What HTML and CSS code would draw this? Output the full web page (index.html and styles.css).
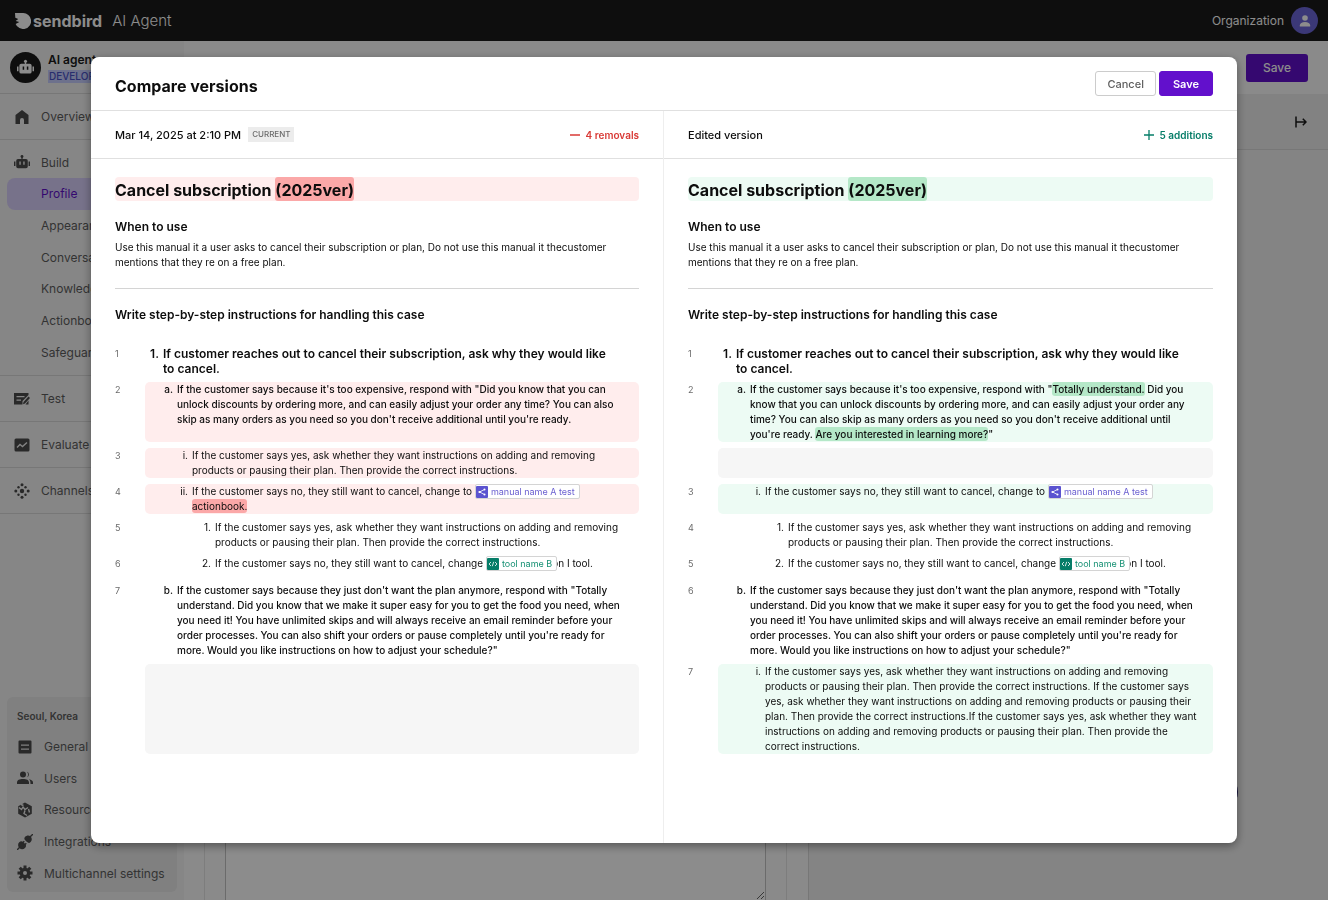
FILE: index.html
```html
<!DOCTYPE html>
<html lang="en">
<head>
    <meta charset="UTF-8">
    <meta name="viewport" content="width=device-width, initial-scale=1.0">
    <title>Compare versions</title>
    <link rel="stylesheet" href="styles.css">
</head>
<body>

<!-- Shared icons -->
<svg class="sprite" aria-hidden="true">
    <symbol id="bot" viewBox="0 0 18 16">
        <circle cx="9" cy="1.8" r="1.6"/>
        <path d="M8.3 2h1.4v3H8.3zM0 7.5h1.6v5H0zM16.4 7.5H18v5h-1.6z"/>
        <path fill-rule="evenodd" d="M4.5 4.5h9a2 2 0 0 1 2 2V13a2 2 0 0 1-2 2h-9a2 2 0 0 1-2-2V6.5a2 2 0 0 1 2-2zM6 7.5v3.5h1.6V7.5zm4.4 0v3.5H12V7.5z"/>
    </symbol>
    <symbol id="share" viewBox="0 0 12 12">
        <path d="M8.5 3.5L3.5 6l5 2.5" fill="none" stroke="#fff" stroke-width=".8"/>
        <circle cx="3.5" cy="6" r="1.1" fill="#fff"/><circle cx="8.5" cy="3.5" r="1" fill="#fff"/><circle cx="8.5" cy="8.5" r="1" fill="#fff"/>
    </symbol>
    <symbol id="code" viewBox="0 0 12 12">
        <path d="M4 4L2 6l2 2M8 4l2 2-2 2M6.7 3.8L5.3 8.2" fill="none" stroke="#fff" stroke-width=".8"/>
    </symbol>
</svg>

<div class="app">
    <header class="app-header">
        <svg class="logo-mark" viewBox="0 0 15 15" aria-hidden="true"><path d="M0 0h7.5A7.5 7.5 0 1 1 .6 10.200L4 8.500.6 7.600 3 5.600.3 4.500z"/></svg>
        <span class="logo-name">sendbird</span>
        <span class="product">AI Agent</span>
        <span class="org">Organization</span>
        <span class="avatar"><svg viewBox="0 0 12 12" width="12" height="12" aria-hidden="true"><circle cx="6" cy="3" r="2.8"/><path d="M.8 11.5V10.5C.8 8.3 3 7 6 7s5.2 1.300 5.2 3.500v1z"/></svg></span>
    </header>

    <div class="shell">
        <nav class="sidebar">
            <div class="agent">
                <span class="agent-icon"><svg width="17" height="16"><use href="#bot"/></svg></span>
                <div>
                    <div class="agent-name">AI agent</div>
                    <span class="agent-env">DEVELOPMENT</span>
                </div>
            </div>
            <div class="nav-group">
                <a class="nav-item" href="#"><svg viewBox="0 0 16 16" aria-hidden="true"><path d="M8 1l6.500 5v9H10v-4a2 2 0 0 0-4 0v4H1.500V6z"/></svg>Overview</a>
            </div>
            <div class="nav-group">
                <a class="nav-item" href="#"><svg aria-hidden="true"><use href="#bot"/></svg>Build</a>
                <div class="sub-list">
                    <a class="active" href="#">Profile</a>
                    <a href="#">Appearance</a>
                    <a href="#">Conversation</a>
                    <a href="#">Knowledge</a>
                    <a href="#">Actionbooks</a>
                    <a href="#">Safeguards</a>
                </div>
            </div>
            <div class="nav-group">
                <a class="nav-item" href="#"><svg viewBox="0 0 16 16" aria-hidden="true"><path fill-rule="evenodd" d="M0 2h14.500v2L8.500 10v3.500H0zM2.500 5v1.300h8V5zm0 3.500v1.300H7V8.500z"/><path d="M14.500 5.500L16 7l-5 5.500-2 .8.500-2.200z"/><path d="M14.500 9.500v4H11.500z"/></svg>Test</a>
            </div>
            <div class="nav-group">
                <a class="nav-item" href="#"><svg viewBox="0 0 16 16" aria-hidden="true"><rect x=".5" y="1.5" width="15" height="13" rx="1.5"/><path class="knock" d="M3 10.500l3-3 2.500 2L13 5.500"/></svg>Evaluate</a>
            </div>
            <div class="nav-group">
                <a class="nav-item" href="#"><svg viewBox="0 0 16 16" aria-hidden="true"><circle cx="8" cy="8" r="2.2"/><circle cx="8" cy="1.8" r="1.5"/><circle cx="8" cy="14.2" r="1.5"/><circle cx="1.8" cy="8" r="1.5"/><circle cx="14.2" cy="8" r="1.5"/><circle cx="4.500" cy="4.200" r="1.200"/><circle cx="11.500" cy="4.200" r="1.200"/><circle cx="4.500" cy="11.800" r="1.200"/><circle cx="11.500" cy="11.800" r="1.200"/></svg>Channels</a>
            </div>

            <div class="workspace-box">
                <div class="workspace-name">Seoul, Korea</div>
                <div class="workspace-list">
                    <a href="#"><svg viewBox="0 0 16 16" aria-hidden="true"><path fill-rule="evenodd" d="M2.500 1.500h11a1 1 0 0 1 1 1v11a1 1 0 0 1-1 1h-11a1 1 0 0 1-1-1v-11a1 1 0 0 1 1-1zM4 5.500v1.300h8V5.500zm0 4v1.300h8V9.500z"/></svg>General</a>
                    <a href="#"><svg viewBox="0 0 16 16" aria-hidden="true"><circle cx="6" cy="4.5" r="3"/><path d="M0 14v-1.500C0 10 2.500 9 6 9s6 1 6 3.500V14zM10 1.700a3 3 0 0 1 0 5.600 4.500 4.500 0 0 0 0-5.600zM12 9.200c2.500.4 4 1.600 4 3.300V14h-2.500c0-2-.2-3.600-1.500-4.800z"/></svg>Users</a>
                    <a href="#"><svg viewBox="0 0 16 16" aria-hidden="true"><path d="M8 .5l6.800 3.800v7.400L8 15.500l-6.800-3.800V4.300z"/><path class="knock" d="M2 5.500l2.500 2L6 5l2 2.500 3-2M8 8.500l-1 3 3 2M11.500 7l1 3.500M4 2.500l2.500 1"/></svg>Resources</a>
                    <a href="#"><svg viewBox="0 0 16 16" aria-hidden="true"><path d="M2.200 8.300c1.600-1.600 2.800-1 4-.2l2 2c1.200 1.200 1.200 2.600-.2 4-1.800 1.600-4 1.600-5.600 0s-1.800-4.200-.2-5.800z"/><path d="M8 3c1.600-1.800 4-2 5.600-.500s1.600 4 0 5.600c-1.200 1.200-2.400 1-3.600 0L8.200 6.300C7.200 5.200 7 4 8 3z"/><path d="M12.500 3.500L16 0M3.500 12.500L0 16M5 9.500l2.300-2.300M7 11.500l2.300-2.300" stroke="#4b4b4b" stroke-width="1.400"/></svg>Integrations</a>
                    <a href="#"><svg viewBox="0 0 16 16" aria-hidden="true"><g stroke="#4b4b4b" stroke-width="3"><path d="M8 .5v15M.5 8h15M2.700 2.700l10.600 10.600M13.300 2.700L2.700 13.300"/></g><circle cx="8" cy="8" r="5.3"/><circle cx="8" cy="8" r="2" fill="#eee"/></svg>Multichannel settings</a>
                </div>
            </div>
        </nav>

        <main class="main">
            <div class="topbar"><button class="btn-save-page" type="button">Save</button></div>
            <div class="work">
                <div class="editor">
                    <div class="editor-card"><textarea aria-label="Instructions"></textarea></div>
                </div>
                <div class="preview">
                    <div class="preview-bar">
                        <button class="btn-collapse" type="button" aria-label="Collapse preview"><svg viewBox="0 0 12 12" width="12" height="12" aria-hidden="true"><path d="M1 .5v11M1.500 6H11M7.800 2.800L11 6 7.800 9.200"/></svg></button>
                    </div>
                    <span class="launcher"></span>
                </div>
            </div>
        </main>
    </div>
</div>

<div class="backdrop">
    <section class="modal" role="dialog" aria-labelledby="modal-title">
        <header class="modal-header">
            <h1 id="modal-title">Compare versions</h1>
            <button class="btn" type="button">Cancel</button>
            <button class="btn btn-primary" type="button">Save</button>
        </header>

        <div class="panes">
            <!-- Current version -->
            <article class="pane removed">
                <header class="pane-header">
                    <span>Mar 14, 2025 at 2:10 PM</span>
                    <span class="tag">CURRENT</span>
                    <span class="count"><svg viewBox="0 0 10 10" width="10" height="10" aria-hidden="true"><path d="M0 5h10"/></svg>4 removals</span>
                </header>
                <div class="pane-body">
                    <h2>Cancel subscription <mark>(2025ver)</mark></h2>
                    <h3>When to use</h3>
                    <p class="usage">Use this manual it a user asks to cancel their subscription or plan, Do not use this manual it thecustomer mentions that they re on a free plan.</p>
                    <h3 class="steps-title">Write step-by-step instructions for handling this case</h3>

                    <div class="row">
                        <span class="num">1</span>
                        <div class="line lv1"><span class="marker">1.</span><p>If customer reaches out to cancel their subscription, ask why they would like to cancel.</p></div>
                    </div>
                    <div class="row">
                        <span class="num">2</span>
                        <div class="line lv2 changed lines-4"><span class="marker">a.</span><p>If the customer says because it's too expensive, respond with "Did you know that you can unlock discounts by ordering more, and can easily adjust your order any time? You can also skip as many orders as you need so you don't receive additional until you're ready.</p></div>
                    </div>
                    <div class="row">
                        <span class="num">3</span>
                        <div class="line lv3 changed"><span class="marker">i.</span><p>If the customer says yes, ask whether they want instructions on adding and removing products or pausing their plan. Then provide the correct instructions.</p></div>
                    </div>
                    <div class="row">
                        <span class="num">4</span>
                        <div class="line lv3 changed"><span class="marker">ii.</span><p>If the customer says no, they still want to cancel, change to <span class="chip chip-manual"><svg aria-hidden="true"><use href="#share"/></svg>manual name A test</span> <mark>actionbook.</mark></p></div>
                    </div>
                    <div class="row">
                        <span class="num">5</span>
                        <div class="line lv4"><span class="marker">1.</span><p>If the customer says yes, ask whether they want instructions on adding and removing products or pausing their plan. Then provide the correct instructions.</p></div>
                    </div>
                    <div class="row">
                        <span class="num">6</span>
                        <div class="line lv4"><span class="marker">2.</span><p>If the customer says no, they still want to cancel, change <span class="chip chip-tool"><svg aria-hidden="true"><use href="#code"/></svg>tool name B</span>on I tool.</p></div>
                    </div>
                    <div class="row row-section">
                        <span class="num">7</span>
                        <div class="line lv2"><span class="marker">b.</span><p>If the customer says because they just don't want the plan anymore, respond with "Totally understand. Did you know that we make it super easy for you to get the food you need, when you need it! You have unlimited skips and will always receive an email reminder before your order processes. You can also shift your orders or pause completely until you're ready for more. Would you like instructions on how to adjust your schedule?"</p></div>
                    </div>
                    <div class="row">
                        <span class="num"></span>
                        <div class="line blank lines-6"></div>
                    </div>
                </div>
            </article>

            <!-- Edited version -->
            <article class="pane added">
                <header class="pane-header">
                    <span>Edited version</span>
                    <span class="count"><svg viewBox="0 0 10 10" width="10" height="10" aria-hidden="true"><path d="M0 5h10M5 0v10"/></svg>5 additions</span>
                </header>
                <div class="pane-body">
                    <h2>Cancel subscription <mark>(2025ver)</mark></h2>
                    <h3>When to use</h3>
                    <p class="usage">Use this manual it a user asks to cancel their subscription or plan, Do not use this manual it thecustomer mentions that they re on a free plan.</p>
                    <h3 class="steps-title">Write step-by-step instructions for handling this case</h3>

                    <div class="row">
                        <span class="num">1</span>
                        <div class="line lv1"><span class="marker">1.</span><p>If customer reaches out to cancel their subscription, ask why they would like to cancel.</p></div>
                    </div>
                    <div class="row">
                        <span class="num">2</span>
                        <div class="line lv2 changed lines-4"><span class="marker">a.</span><p>If the customer says because it's too expensive, respond with "<mark>Totally understand.</mark> Did you know that you can unlock discounts by ordering more, and can easily adjust your order any time? You can also skip as many orders as you need so you don't receive additional until you're ready. <mark>Are you interested in learning more?</mark>"</p></div>
                    </div>
                    <div class="row">
                        <span class="num"></span>
                        <div class="line blank lines-2"></div>
                    </div>
                    <div class="row">
                        <span class="num">3</span>
                        <div class="line lv3 changed lines-2"><span class="marker">i.</span><p>If the customer says no, they still want to cancel, change to <span class="chip chip-manual"><svg aria-hidden="true"><use href="#share"/></svg>manual name A test</span></p></div>
                    </div>
                    <div class="row">
                        <span class="num">4</span>
                        <div class="line lv4"><span class="marker">1.</span><p>If the customer says yes, ask whether they want instructions on adding and removing products or pausing their plan. Then provide the correct instructions.</p></div>
                    </div>
                    <div class="row">
                        <span class="num">5</span>
                        <div class="line lv4"><span class="marker">2.</span><p>If the customer says no, they still want to cancel, change <span class="chip chip-tool"><svg aria-hidden="true"><use href="#code"/></svg>tool name B</span>on I tool.</p></div>
                    </div>
                    <div class="row row-section">
                        <span class="num">6</span>
                        <div class="line lv2"><span class="marker">b.</span><p>If the customer says because they just don't want the plan anymore, respond with "Totally understand. Did you know that we make it super easy for you to get the food you need, when you need it! You have unlimited skips and will always receive an email reminder before your order processes. You can also shift your orders or pause completely until you're ready for more. Would you like instructions on how to adjust your schedule?"</p></div>
                    </div>
                    <div class="row">
                        <span class="num">7</span>
                        <div class="line lv3 changed"><span class="marker">i.</span><p>If the customer says yes, ask whether they want instructions on adding and removing products or pausing their plan. Then provide the correct instructions. If the customer says yes, ask whether they want instructions on adding and removing products or pausing their plan. Then provide the correct instructions.If the customer says yes, ask whether they want instructions on adding and removing products or pausing their plan. Then provide the correct instructions.</p></div>
                    </div>
                </div>
            </article>
        </div>
    </section>
</div>

</body>
</html>
```
FILE: styles.css
```css
* {
    box-sizing: border-box;
}
body {
    margin: 0;
    font-family: Inter, "Liberation Sans", sans-serif;
    font-size: 12px;
    color: #0d0d0d;
    overflow: hidden;
}
a {
    color: inherit;
    text-decoration: none;
}
button {
    font-family: inherit;
    cursor: pointer;
}
h1, h2, h3, p {
    margin: 0;
}
.sprite {
    display: none;
}

/* Page behind the dialog */
.app {
    height: 100vh;
    display: flex;
    flex-direction: column;
}
.app-header {
    flex: none;
    height: 41px;
    display: flex;
    align-items: center;
    padding: 0 10px 0 15px;
    background-color: #1a1a1a;
    color: #fff;
}
.logo-mark {
    width: 16px;
    height: 16px;
    fill: #fff;
    margin-right: 2px;
}
.logo-name {
    font-size: 16px;
    font-weight: 700;
}
.product {
    font-size: 15px;
    font-weight: 300;
    margin-left: 10px;
}
.org {
    margin-left: auto;
}
.avatar {
    width: 27px;
    height: 27px;
    border-radius: 50%;
    margin-left: 7px;
    background-color: #6c66d9;
    display: flex;
    align-items: center;
    justify-content: center;
}
.avatar svg {
    fill: #fff;
}
.shell {
    flex: 1;
    min-height: 0;
    display: flex;
}
.sidebar {
    flex: none;
    width: 184px;
    background-color: #f4f4f4;
    display: flex;
    flex-direction: column;
    padding-bottom: 8px;
    color: #5e5e5e;
}
.agent {
    height: 53px;
    display: flex;
    align-items: center;
    gap: 7px;
    padding: 0 10px;
    border-bottom: 1px solid #d9d9d9;
    overflow: hidden;
}
.agent-icon {
    flex: none;
    width: 31px;
    height: 31px;
    border-radius: 50%;
    background-color: #1a1a1a;
    fill: #fff;
    display: flex;
    align-items: center;
    justify-content: center;
}
.agent-name {
    font-weight: 600;
    line-height: 16px;
    color: #1a1a1a;
}
.agent-env {
    font-size: 10px;
    font-weight: 500;
    line-height: 13px;
    padding: 0 1px;
    background-color: #c6ceff;
    color: #4a52c8;
    display: inline-block;
}
.nav-group {
    border-bottom: 1px solid #d9d9d9;
}
.nav-item {
    height: 45px;
    display: flex;
    align-items: center;
    gap: 11px;
    padding-left: 14px;
}
.nav-group:has(.sub-list) {
    padding-bottom: 7px;
}
.nav-group:has(.sub-list) .nav-item {
    height: 38px;
    padding-top: 6px;
}
.nav-item svg, .workspace-list svg {
    width: 16px;
    height: 16px;
    fill: #4b4b4b;
}
.sidebar .knock {
    fill: none;
    stroke: #eee;
    stroke-width: 1.4;
}
.sub-list {
    height: 190px;
    margin: 0 7px;
    display: grid;
    grid-auto-rows: 1fr;
}
.sub-list a {
    display: flex;
    align-items: center;
    padding-left: 34px;
    border-radius: 8px;
}
.sub-list .active {
    background-color: #d9d0fb;
    color: #6210cc;
}
.workspace-box {
    margin: auto 7px 0;
    padding: 12px 10px 3px;
    border-radius: 6px;
    background-color: #e9e9e9;
}
.workspace-name {
    font-size: 10px;
    font-weight: 600;
    line-height: 14px;
    margin-bottom: 8px;
}
.workspace-list {
    height: 158px;
    display: grid;
    grid-auto-rows: 1fr;
}
.workspace-list a {
    display: flex;
    align-items: center;
    gap: 11px;
}
.main {
    flex: 1;
    display: flex;
    flex-direction: column;
}
.topbar {
    flex: none;
    height: 53px;
    padding-right: 20px;
    display: flex;
    align-items: center;
    justify-content: flex-end;
    background-color: #fbfbfb;
}
.btn-save-page {
    height: 28px;
    width: 62px;
    border: none;
    border-radius: 3px;
    background-color: #6210cc;
    color: #fff;
    font-size: 12px;
    font-weight: 500;
}
.work {
    flex: 1;
    min-height: 0;
    display: grid;
    grid-template-columns: 6fr 5fr;
}
.editor {
    padding: 0 21px 0 20px;
    background-color: #fbfbfb;
}
.editor-card {
    height: 100%;
    padding: 0 20px;
    border: solid #e4e4e4;
    border-width: 0 1px;
}
.editor-card textarea {
    width: 100%;
    height: 100%;
    border: solid #c4c4c4;
    border-width: 0 1px;
    background-color: #fff;
    display: block;
    resize: vertical;
}
.preview {
    position: relative;
    border-left: 1px solid #d9d9d9;
    background-color: #f0f0f0;
}
.preview-bar {
    height: 56px;
    padding-right: 15px;
    display: flex;
    align-items: center;
    justify-content: flex-end;
    background-color: #ededed;
    border-bottom: 1px solid #d9d9d9;
}
.btn-collapse {
    padding: 6px;
    border: none;
    background: none;
    display: flex;
}
.btn-collapse svg {
    fill: none;
    stroke: #1a1a1a;
    stroke-width: 1.5;
}
.launcher {
    position: absolute;
    right: 90px;
    bottom: 90px;
    width: 36px;
    height: 36px;
    border-radius: 50%;
    background-color: #2b2770;
}

/* Dialog */
.backdrop {
    position: fixed;
    inset: 0;
    padding: 57px 91px;
    display: flex;
    background-color: rgba(0, 0, 0, 0.45);
}
.modal {
    flex: 1;
    display: flex;
    flex-direction: column;
    overflow: hidden;
    border-radius: 8px;
    background-color: #fff;
    box-shadow: 0 3px 10px rgba(0, 0, 0, 0.4);
}
.modal-header {
    height: 54px;
    flex: none;
    display: flex;
    align-items: center;
    gap: 3px;
    padding: 0 24px;
    border-bottom: 1px solid #e0e0e0;
}
.modal-header h1 {
    flex: 1;
    font-size: 16px;
    font-weight: 700;
    line-height: 24px;
    padding-top: 4px;
}
.btn {
    height: 25px;
    padding: 0 11px;
    border: 1px solid #ccc;
    border-radius: 3px;
    background-color: #fff;
    color: #5e5e5e;
    font-size: 11px;
    font-weight: 500;
}
.btn-primary {
    padding: 0 13px;
    border-color: #6210cc;
    background-color: #6210cc;
    color: #fff;
    font-weight: 600;
}
.panes {
    flex: 1;
    min-height: 0;
    display: grid;
    grid-template-columns: 1fr 1fr;
}
.pane.removed {
    border-right: 1px solid #eee;
}
.pane-header {
    height: 48px;
    display: flex;
    align-items: center;
    gap: 7px;
    padding: 0 24px;
    border-bottom: 1px solid #e0e0e0;
    font-size: 11px;
    font-weight: 500;
}
.tag {
    padding: 0 4px;
    background-color: #ececec;
    color: #6b6b6b;
    font-size: 8px;
    font-weight: 500;
    line-height: 15px;
}
.count {
    margin-left: auto;
    display: flex;
    align-items: center;
    gap: 6px;
    font-size: 10px;
    font-weight: 600;
}
.count svg {
    stroke: currentColor;
    stroke-width: 1.3;
}
.removed .count {
    color: #d93a36;
}
.added .count {
    color: #067d68;
}
.pane-body {
    padding: 18px 24px;
}
.pane-body h2 {
    font-size: 16px;
    font-weight: 700;
    line-height: 21px;
    padding-top: 3px;
    border-radius: 4px;
    margin-bottom: 18px;
}
.pane-body h3 {
    font-size: 12px;
    font-weight: 600;
    line-height: 16px;
}
.usage {
    margin-top: 5px;
    padding: 0 14px 18px 0;
    border-bottom: 1px solid #d4d4d4;
    font-size: 10px;
    line-height: 15px;
}
.pane-body .steps-title {
    margin: 18px 0 23px;
}
mark {
    color: inherit;
    border-radius: 3px;
}
h2 mark {
    display: inline-block;
    margin-top: -3px;
    padding-top: 3px;
}
.removed h2, .removed .changed {
    background-color: #ffeded;
}
.removed mark {
    background-color: #fba8a8;
}
.added h2, .added .changed {
    background-color: #edfbf4;
}
.added mark {
    background-color: #b5e8c8;
}
.line mark {
    padding: 1px 0;
}
.row {
    display: grid;
    grid-template-columns: 30px 1fr;
    margin-bottom: 6px;
    line-height: 15px;
}
.row-section {
    margin-top: 12px;
}
.num {
    font-size: 9px;
    color: #6b6b6b;
}
.line {
    display: flex;
    border-radius: 5px;
    font-size: 10px;
}
.line p {
    padding-right: 14px;
}
.marker {
    flex: none;
    text-align: right;
    padding-right: 4px;
}
.lv1 {
    font-size: 12px;
    font-weight: 600;
}
.lv1 p {
    padding-right: 24px;
}
.lv1 .marker {
    width: 18px;
}
.lv2 {
    font-weight: 500;
}
.lv2 .marker {
    width: 32px;
}
.lv3 .marker {
    width: 47px;
}
.lv4 .marker {
    width: 70px;
}
.blank {
    background-color: #f6f6f6;
}
.lines-2 {
    min-height: 30px;
}
.lines-4 {
    min-height: 60px;
}
.lines-6 {
    min-height: 90px;
}
.chip {
    position: relative;
    display: inline-flex;
    align-items: center;
    gap: 3px;
    height: 15px;
    padding: 0 4px 0 0;
    border: 1px solid #d4d4d4;
    border-radius: 2px;
    background-color: #fff;
    font-size: 9px;
    vertical-align: top;
}
.chip svg {
    width: 12px;
    height: 12px;
    border-radius: 1px;
}
.chip-manual {
    color: #6a5fd0;
}
.chip-manual svg {
    background-color: #5b53d0;
}
.chip-tool {
    margin-right: -5px;
    color: #159073;
}
.chip-tool svg {
    background-color: #067d68;
}
```
